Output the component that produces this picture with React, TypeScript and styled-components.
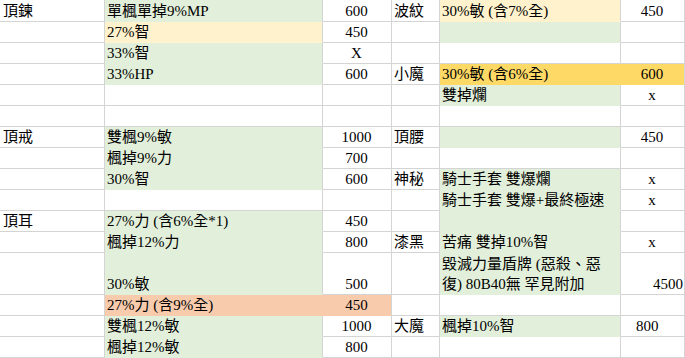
import React from "react";
import styled, { createGlobalStyle } from "styled-components";

type Fill = "green" | "yellow" | "gold" | "peach";
type Align = "left" | "center" | "right";

interface ICell {
  t?: string;
  f?: Fill;
  join?: boolean;
  align?: Align;
  pad?: number;
  wrap?: boolean;
}

type CellDef = string | ICell;

const fills: Record<Fill, string> = {
  green: "#e2efda",
  yellow: "#fff2cc",
  gold: "#ffd966",
  peach: "#f8cbad",
};

// column default alignment: A B C D E F
const colAlign: Align[] = ["left", "left", "center", "left", "left", "center"];

const rows: CellDef[][] = [
  ["頂鍊", { t: "單楓單掉9%MP", f: "green" }, "600", "波紋", { t: "30%敏 (含7%全)", f: "yellow" }, "450"],
  ["", { t: "27%智", f: "yellow" }, "450", "", { f: "green" }, ""],
  ["", { t: "33%智", f: "green" }, "X", "", "", ""],
  ["", { t: "33%HP", f: "green" }, "600", "小魔", { t: "30%敏 (含6%全)", f: "gold", join: true }, { t: "600", f: "gold" }],
  ["", "", "", "", { t: "雙掉爛", f: "green" }, "x"],
  ["", "", "", "", "", ""],
  ["頂戒", { t: "雙楓9%敏", f: "green" }, "1000", "頂腰", { f: "green" }, "450"],
  ["", { t: "楓掉9%力", f: "green" }, "700", "", "", ""],
  ["", { t: "30%智", f: "green" }, "600", "神秘", { t: "騎士手套 雙爆爛", f: "green" }, "x"],
  ["", "", "", "", { t: "騎士手套 雙爆+最終極速", f: "green" }, "x"],
  ["頂耳", { t: "27%力 (含6%全*1)", f: "green" }, "450", "", { f: "green" }, ""],
  ["", { t: "楓掉12%力", f: "green" }, "800", "漆黑", { t: "苦痛 雙掉10%智", f: "green" }, "x"],
  ["", { t: "30%敏", f: "green" }, "500", "", { t: "毀滅力量盾牌 (惡殺、惡復) 80B40無 罕見附加", f: "green", wrap: true }, { t: "4500", align: "right" }],
  ["", { t: "27%力 (含9%全)", f: "peach", join: true }, { t: "450", f: "peach" }, "", "", ""],
  ["", { t: "雙楓12%敏", f: "green" }, "1000", "大魔", { t: "楓掉10%智", f: "green" }, { t: "800", align: "left", pad: 15 }],
  ["", { t: "楓掉12%敏", f: "green" }, "800", "", "", ""],
];

const GlobalStyle = createGlobalStyle`
  html, body {
    margin: 0;
    padding: 0;
    background: #ffffff;
    overflow: hidden;
  }
  body {
    font-family: "Liberation Serif", "Noto Sans CJK TC", serif;
    color: #000000;
  }
`;

const Sheet = styled.div`
  display: grid;
  grid-template-columns: 105px 218px 69px 48px 181px 64px;
  grid-template-rows: 22px repeat(11, 21px) 42px repeat(3, 21px);
  width: 685px;
  height: 358px;
`;

const Cell = styled.div<{ $fill?: string; $align: Align; $join?: boolean; $pad: number; $wrap?: boolean }>`
  box-sizing: border-box;
  display: flex;
  align-items: flex-end;
  justify-content: ${(p) =>
    p.$align === "center" ? "center" : p.$align === "right" ? "flex-end" : "flex-start"};
  padding: 0 1px 0 ${(p) => p.$pad}px;
  background: ${(p) => p.$fill ?? "#ffffff"};
  border-right: 1px solid ${(p) => (p.$join && p.$fill ? p.$fill : "#d4d4d4")};
  border-bottom: 1px solid ${(p) => p.$fill ?? "#d4d4d4"};
  font-size: 15px;
  line-height: ${(p) => (p.$wrap ? "20px" : "19px")};
  white-space: ${(p) => (p.$wrap ? "normal" : "nowrap")};
  overflow: visible;
`;

function App(): JSX.Element {
  return (
    <React.Fragment>
      <GlobalStyle />
      <Sheet>
        {rows.map((row, r) =>
          row.map((def, c) => {
            const cell: ICell = typeof def === "string" ? { t: def } : def;
            const align = cell.align ?? colAlign[c];
            const pad = cell.pad ?? (c === 0 ? 3 : 2);
            return (
              <Cell
                key={`${r}-${c}`}
                $fill={cell.f ? fills[cell.f] : undefined}
                $align={align}
                $join={cell.join}
                $pad={align === "center" ? 0 : pad}
                $wrap={cell.wrap}
              >
                {cell.t ? <span>{cell.t}</span> : null}
              </Cell>
            );
          })
        )}
      </Sheet>
    </React.Fragment>
  );
}

export default App;
